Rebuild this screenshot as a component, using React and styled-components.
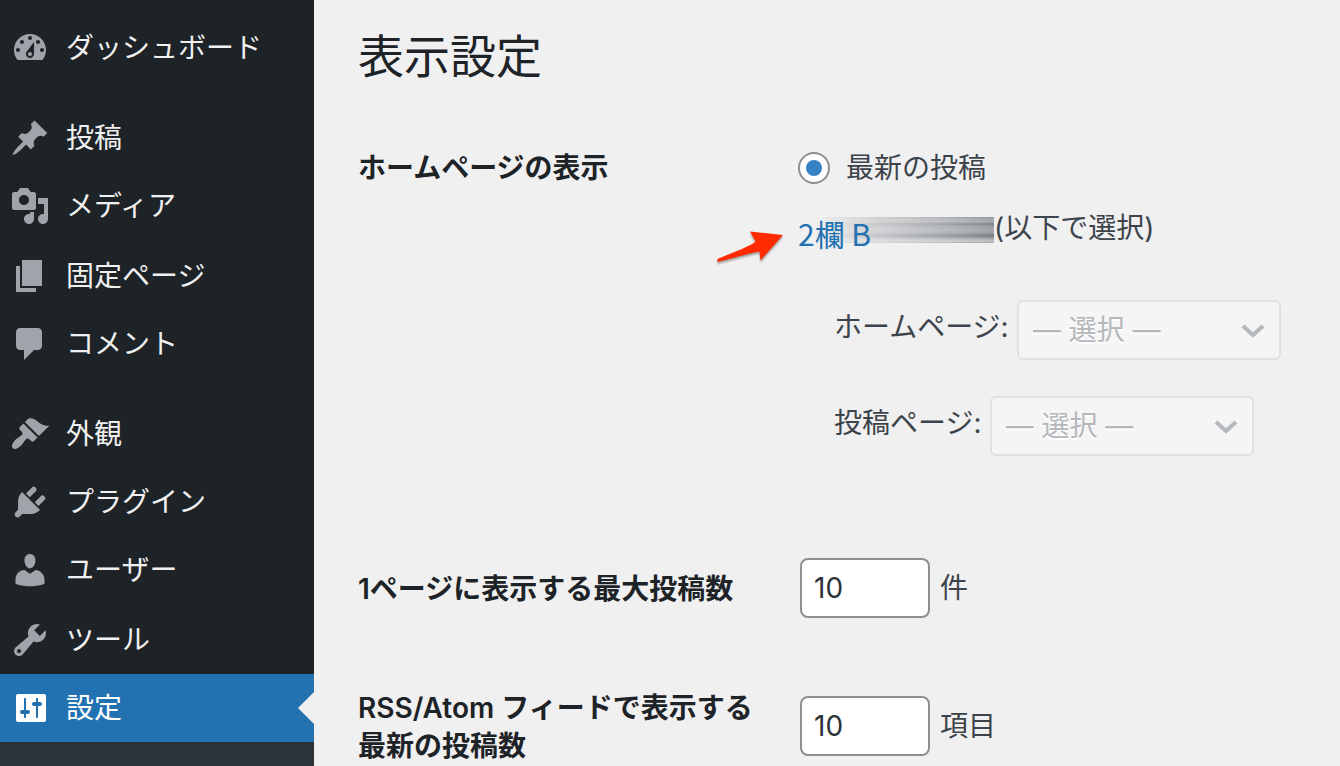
import { useState } from "react"
import styled, { createGlobalStyle } from "styled-components"

const GlobalStyle = createGlobalStyle`
  * {
    box-sizing: border-box;
  }

  body {
    margin: 0;
    background: #f0f0f1;
    color: #3c434a;
    font-family: Inter, "Noto Sans CJK JP", sans-serif;
    font-size: 28px;
    line-height: 40px;
  }
`

const Shell = styled.div`
  display: flex;
  height: 100vh;
  overflow: hidden;
`

const Sidebar = styled.nav`
  flex: 0 0 314px;
  display: flex;
  flex-direction: column;
  padding-top: 14px;
  background: #1d2327;
`

const MenuGroup = styled.ul`
  list-style: none;
  margin: 0 0 22px;
  padding: 0;

  &:last-of-type {
    margin-bottom: 0;
  }
`

const MenuLink = styled.a`
  position: relative;
  display: flex;
  align-items: flex-start;
  gap: 16px;
  height: ${(props) => (props.$tall ? "70px" : "68px")};
  padding: 14px 10px;
  color: ${(props) => (props.$current ? "#fff" : "#f0f0f1")};
  background: ${(props) => (props.$current ? "#2271b1" : "transparent")};
  text-decoration: none;
  white-space: nowrap;
`

const MenuIcon = styled.svg`
  flex: none;
  width: 40px;
  height: 40px;
  fill: ${(props) => (props.$current ? "#fff" : "#a0a3a9")};
`

const CurrentArrow = styled.span`
  position: absolute;
  top: 18px;
  right: 0;
  border: 16px solid transparent;
  border-left-width: 0;
  border-right-color: #f0f0f1;
`

const Submenu = styled.div`
  flex: 1;
  background: #2c3338;
`

const Main = styled.main`
  flex: 1;
  min-width: 0;
  padding: 26px 44px 0;
`

const PageTitle = styled.h1`
  margin: 0 0 22px;
  color: #1d2327;
  font-size: 46px;
  font-weight: 400;
  line-height: 60px;
`

const FormRow = styled.div`
  display: grid;
  grid-template-columns: 400px 1fr;
  column-gap: 40px;
  align-items: ${(props) => (props.$top ? "start" : "center")};
`

const RowHeading = styled.div`
  padding: 41px 0 39px;
  color: #1d2327;
  font-weight: 600;
  line-height: 38px;
`

const HomeOptions = styled.div`
  padding: 40px 0 72px;
`

const RadioLabel = styled.label`
  display: flex;
  align-items: center;
  gap: 16px;
  margin-bottom: 20px;
`

const Radio = styled.input`
  appearance: none;
  display: grid;
  place-items: center;
  width: 32px;
  height: 32px;
  margin: 0;
  border: 2px solid #8c8f94;
  border-radius: 50%;
  background: #fff;

  &:checked::before {
    content: "";
    width: 16px;
    height: 16px;
    border-radius: 50%;
    background: #3582c4;
  }
`

const StaticOption = styled.div`
  position: relative;
  display: flex;
  align-items: flex-start;
`

const Smear = styled.div`
  display: flex;
  align-items: center;
  width: 196px;
  height: 26px;
  margin-top: 9px;
  background:
    linear-gradient(to right, #f0f0f1 8%, rgba(240, 240, 241, 0.65) 38%, rgba(240, 240, 241, 0.3) 75%, rgba(240, 240, 241, 0) 100%),
    linear-gradient(
      to bottom,
      #8f9396 0,
      #a4a7aa 2px,
      #a6a9ac 5px,
      #7c8186 7px,
      #979b9f 9px,
      #a3a6aa 13px,
      #9a9da1 16px,
      #777c82 18px,
      #85898e 20px,
      #aaadb0 22px,
      #c2c4c6 24px,
      #9fa2a5 26px
    );
`

const ColumnLink = styled.a`
  padding-top: 6px;
  color: #2271b1;
  font-family: "Noto Sans CJK JP", sans-serif;
  font-size: 30px;
  text-decoration: none;
`

const Pointer = styled.svg`
  position: absolute;
  left: -84px;
  top: 20px;
  width: 72px;
  height: 42px;
  filter: drop-shadow(0 2px 1px rgba(0, 0, 0, 0.35));
`

const PageList = styled.ul`
  display: grid;
  gap: 36px;
  list-style: none;
  margin: 52px 0 0;
  padding: 0 0 0 36px;
`

const PageItem = styled.li`
  display: flex;
  align-items: center;
  gap: 8px;
`

const SelectLabel = styled.label`
  padding-bottom: 6px;
`

const SelectWrap = styled.span`
  position: relative;
  display: flex;
`

const Select = styled.select`
  appearance: none;
  width: 264px;
  height: 60px;
  padding: 0 48px 0 14px;
  border: 2px solid #e1e1e3;
  border-radius: 6px;
  background: #f5f5f5;
  color: #b4b8bc;
  font: inherit;
  opacity: 1;
  text-shadow: 0 2px 0 #fff;
`

const Chevron = styled.svg`
  position: absolute;
  top: 23px;
  right: 16px;
  width: 24px;
  height: 16px;
  fill: none;
  stroke: #b4b8bc;
  stroke-width: 4;
  pointer-events: none;
`

const CountField = styled.div`
  display: flex;
  align-items: center;
  gap: 10px;
  padding: 30px 2px;
`

const CountInput = styled.input`
  width: 130px;
  height: 60px;
  padding: 0 12px;
  border: 2px solid #8c8f94;
  border-radius: 8px;
  background: #fff;
  color: #2c3338;
  font: inherit;
`

const menu = [
  [
    {
      label: "ダッシュボード",
      icon: "M3.76 16h12.48c1.1-1.37 1.76-3.11 1.76-5 0-4.42-3.58-8-8-8s-8 3.58-8 8c0 1.89.66 3.63 1.76 5zM10 4c.55 0 1 .45 1 1s-.45 1-1 1-1-.45-1-1 .45-1 1-1zM6 6c.55 0 1 .45 1 1s-.45 1-1 1-1-.45-1-1 .45-1 1-1zm8 0c.55 0 1 .45 1 1s-.45 1-1 1-1-.45-1-1 .45-1 1-1zm-5.37 5.55L12 7v6c0 1.1-.9 2-2 2s-2-.9-2-2c0-.57.24-1.08.63-1.45zM4 10c.55 0 1 .45 1 1s-.45 1-1 1-1-.45-1-1 .45-1 1-1zm12 0c.55 0 1 .45 1 1s-.45 1-1 1-1-.45-1-1 .45-1 1-1zm-5 3c0-.55-.45-1-1-1s-1 .45-1 1 .45 1 1 1 1-.45 1-1z",
    },
  ],
  [
    {
      label: "投稿",
      icon: "M10.44 3.02l1.82-1.82 6.36 6.35-1.83 1.82c-1.05-.68-2.48-.57-3.41.36l-.75.75c-.92.93-1.04 2.35-.35 3.41l-1.83 1.82-2.41-2.41-2.8 2.79c-.42.42-3.38 2.71-3.8 2.29s1.86-3.39 2.28-3.81l2.79-2.79L4.1 9.36l1.83-1.82c1.05.69 2.48.57 3.4-.36l.75-.75c.93-.92 1.05-2.35.36-3.41z",
    },
    {
      label: "メディア",
      tall: true,
      icon: "M13 11V4c0-.55-.45-1-1-1h-1.67L9 1H5L3.67 3H2c-.55 0-1 .45-1 1v7c0 .55.45 1 1 1h10c.55 0 1-.45 1-1zM7 4.5c1.38 0 2.5 1.12 2.5 2.5S8.38 9.5 7 9.5 4.5 8.38 4.5 7 5.62 4.5 7 4.5zM14 6h5v10.5c0 1.38-1.12 2.5-2.5 2.5S14 17.88 14 16.5s1.12-2.5 2.5-2.5c.17 0 .34.02.5.05V9h-3V6zm-4 8.05V13h2v3.5c0 1.38-1.12 2.5-2.5 2.5S7 17.88 7 16.5 8.12 14 9.5 14c.17 0 .34.02.5.05z",
    },
    {
      label: "固定ページ",
      icon: "M6 15V2h10v13H6zm-1 1h8v2H3V5h2v11z",
    },
    {
      label: "コメント",
      icon: "M5 2h9c1.1 0 2 .9 2 2v7c0 1.1-.9 2-2 2h-2l-5 5v-5H5c-1.1 0-2-.9-2-2V4c0-1.1.9-2 2-2z",
    },
  ],
  [
    {
      label: "外観",
      icon: "M14.48 11.06L7.41 3.99l1.5-1.5c.5-.56 2.3-.47 3.51.32 1.21.8 1.43 1.28 2.91 2.1 1.18.64 2.45 1.26 4.45.85zm-.71.71L6.7 4.7 4.93 6.47c-.39.39-.39 1.02 0 1.41l1.06 1.06c.39.39.39 1.03 0 1.42-.6.6-1.43 1.11-2.21 1.69-.35.26-.7.53-1.01.84C1.43 14.23.4 16.08 1.4 17.07c.99 1 2.84-.03 4.18-1.36.31-.31.58-.66.85-1.02.57-.78 1.08-1.61 1.69-2.21.39-.39 1.02-.39 1.41 0l1.06 1.06c.39.39 1.02.39 1.41 0z",
    },
    {
      label: "プラグイン",
      icon: "M13.11 4.36L9.87 7.6 8 5.73l3.24-3.24c.35-.34 1.05-.2 1.56.32.52.51.66 1.21.31 1.55zm-8 1.77l.91-1.12 9.01 9.01-1.19.84c-.71.71-2.63 1.16-3.82 1.16H6.14L4.9 17.26c-.59.59-1.54.59-2.12 0-.59-.58-.59-1.53 0-2.12l1.24-1.24v-3.88c0-1.13.4-3.19 1.09-3.89zm7.26 3.97l3.24-3.24c.34-.35 1.04-.21 1.55.31.52.51.66 1.21.31 1.55l-3.24 3.25z",
    },
    {
      label: "ユーザー",
      tall: true,
      icon: "M10 9.25c-2.27 0-2.73-3.44-2.73-3.44C7 4.02 7.82 2 9.97 2c2.16 0 2.98 2.02 2.71 3.81 0 0-.41 3.44-2.68 3.44zm0 2.57L12.72 10c2.39 0 4.52 2.33 4.52 4.53v2.49s-3.65 1.13-7.24 1.13c-3.65 0-7.24-1.13-7.24-1.13v-2.49c0-2.25 1.94-4.48 4.47-4.48z",
    },
    {
      label: "ツール",
      icon: "M16.68 9.77c-1.34 1.34-3.3 1.67-4.95.99l-5.41 6.52c-.99.99-2.59.99-3.58 0s-.99-2.59 0-3.57l6.52-5.42c-.68-1.65-.35-3.61.99-4.95 1.28-1.28 3.12-1.62 4.72-1.06l-2.89 2.89 2.82 2.82 2.86-2.87c.53 1.58.18 3.39-1.08 4.65zM3.81 16.21c.4.39 1.04.39 1.43 0 .4-.4.4-1.04 0-1.43-.39-.4-1.03-.4-1.43 0-.39.39-.39 1.03 0 1.43z",
    },
    {
      label: "設定",
      current: true,
      icon: "M18 16V4c0-.55-.45-1-1-1H4c-.55 0-1 .45-1 1v12c0 .55.45 1 1 1h13c.55 0 1-.45 1-1zM8 11h1c.55 0 1 .45 1 1s-.45 1-1 1H8v1.5c0 .28-.22.5-.5.5s-.5-.22-.5-.5V13H6c-.55 0-1-.45-1-1s.45-1 1-1h1V5.5c0-.28.22-.5.5-.5s.5.22.5.5V11zm5-2h-1c-.55 0-1-.45-1-1s.45-1 1-1h1V5.5c0-.28.22-.5.5-.5s.5.22.5.5V7h1c.55 0 1 .45 1 1s-.45 1-1 1h-1v5.5c0 .28-.22.5-.5.5s-.5-.22-.5-.5V9z",
    },
  ],
]

const PageSelect = ({ id, label }) => (
  <PageItem>
    <SelectLabel htmlFor={id}>{label}</SelectLabel>
    <SelectWrap>
      <Select id={id} disabled>
        <option>— 選択 —</option>
      </Select>
      <Chevron viewBox="0 0 24 16" aria-hidden="true">
        <path d="M2 3l10 9 10-9" />
      </Chevron>
    </SelectWrap>
  </PageItem>
)

const CountRow = ({ id, label, unit }) => {
  const [value, setValue] = useState("10")

  return (
    <FormRow>
      <RowHeading as="label" htmlFor={id}>{label}</RowHeading>
      <CountField>
        <CountInput
          id={id}
          inputMode="numeric"
          value={value}
          onChange={(e) => setValue(e.target.value)}
        />
        {unit}
      </CountField>
    </FormRow>
  )
}

const App = () => {
  return (
    <>
      <GlobalStyle />
      <Shell>
        <Sidebar>
          {menu.map((group, i) => (
            <MenuGroup key={i}>
              {group.map((item) => (
                <li key={item.label}>
                  <MenuLink href="#" $tall={item.tall} $current={item.current}>
                    <MenuIcon viewBox="0 0 20 20" $current={item.current} aria-hidden="true">
                      <path d={item.icon} />
                    </MenuIcon>
                    {item.label}
                    {item.current && <CurrentArrow />}
                  </MenuLink>
                </li>
              ))}
            </MenuGroup>
          ))}
          <Submenu />
        </Sidebar>
        <Main>
          <PageTitle>表示設定</PageTitle>
          <FormRow $top>
            <RowHeading>ホームページの表示</RowHeading>
            <HomeOptions>
              <RadioLabel>
                <Radio type="radio" name="show_on_front" defaultChecked />
                最新の投稿
              </RadioLabel>
              <StaticOption>
                <Pointer viewBox="0 0 72 42" aria-hidden="true">
                  <path
                    fill="#ff2a00"
                    d="M69 7L36 3.500L41.500 13.500C37 18 20 24 3.500 31V34C20 30 34 25.500 45.500 23.500L46.500 32.500Z"
                  />
                </Pointer>
                <Smear>
                  <ColumnLink href="#">2欄 B</ColumnLink>
                </Smear>
                (以下で選択)
              </StaticOption>
              <PageList>
                <PageSelect id="page_on_front" label="ホームページ:" />
                <PageSelect id="page_for_posts" label="投稿ページ:" />
              </PageList>
            </HomeOptions>
          </FormRow>
          <CountRow id="posts_per_page" label="1ページに表示する最大投稿数" unit="件" />
          <CountRow id="posts_per_rss" label="RSS/Atom フィードで表示する最新の投稿数" unit="項目" />
        </Main>
      </Shell>
    </>
  )
}

export default App
